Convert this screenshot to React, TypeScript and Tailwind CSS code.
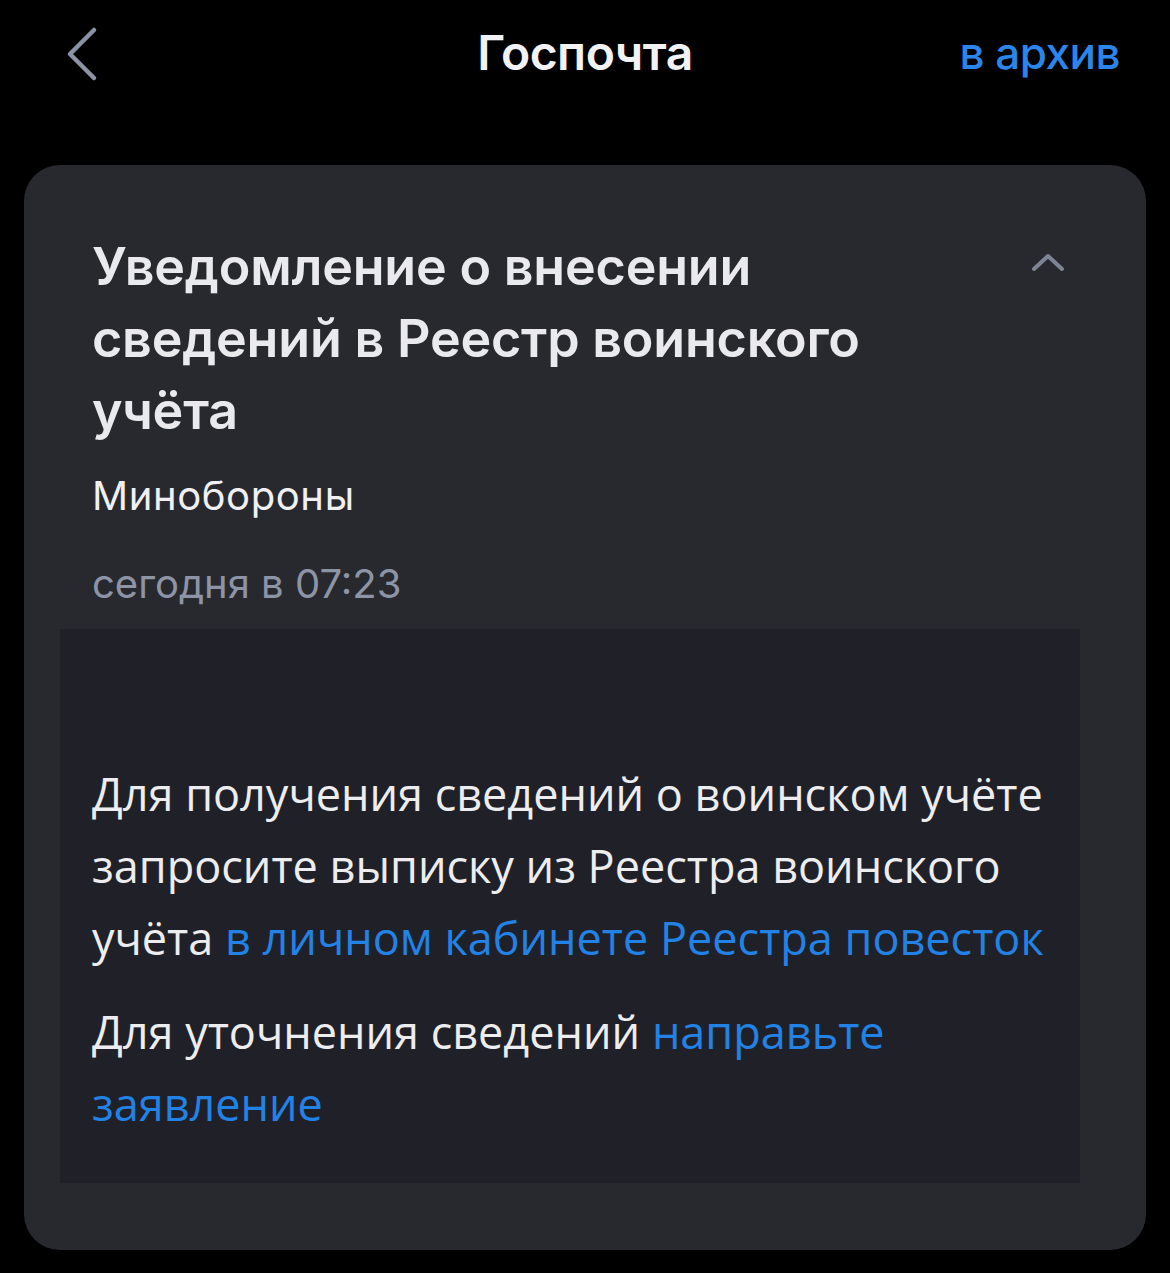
import React from 'react';

const ChevronLeft = () => (
    <svg width="40" height="56" viewBox="0 0 40 56" fill="none">
        <path d="M32 4 L8 28 L32 52" stroke="#8a93a6" strokeWidth="4.5" strokeLinecap="round" strokeLinejoin="round" />
    </svg>
);

const ChevronUp = () => (
    <svg width="36" height="22" viewBox="0 0 36 22" fill="none">
        <path d="M4 18 L18 5 L32 18" stroke="#7c8496" strokeWidth="4" strokeLinecap="round" strokeLinejoin="round" />
    </svg>
);

const App: React.FC = () => {
    return (
        <div className="min-h-[1273px] w-[1170px] bg-black" style={{ fontFamily: 'Inter, "Noto Sans", sans-serif' }}>
            {/* top bar */}
            <div className="relative flex h-[106px] items-center justify-between px-[62px] pr-[50px]">
                <button className="flex items-center pt-[2px]">
                    <ChevronLeft />
                </button>
                <h1 className="absolute left-0 right-0 text-center text-[48px] font-semibold tracking-[-0.5px] text-[#f2f2f5]">
                    Госпочта
                </h1>
                <span className="text-[44px] font-medium tracking-[-0.5px] text-[#2a86e8]">в архив</span>
            </div>

            <div className="px-[24px] pt-[59px]">
                <div className="rounded-[36px] bg-[#28292f] pt-[66px] pb-[67px]">
                    <div className="flex items-start justify-between pl-[68px] pr-[80px]">
                        <h2 className="w-[850px] text-[52px] font-semibold leading-[72px] tracking-[-0.2px] text-[#e9e9ee]">
                            Уведомление о внесении сведений в Реестр воинского учёта
                        </h2>
                        <div className="pt-[20px]">
                            <ChevronUp />
                        </div>
                    </div>
                    <div className="pl-[68px] pt-[24px] text-[40px] leading-[50px] tracking-[0.6px] text-[#f0f0f3]">Минобороны</div>
                    <div className="pl-[68px] pt-[38px] text-[40px] leading-[50px] text-[#8d94a6]">сегодня в 07:23</div>

                    <div
                        className="mt-[20px] ml-[36px] mr-[66px] bg-[#202128] pl-[32px] pr-[4px] pt-[129px] pb-[43px] text-[45px] leading-[72px] text-[#ededf0]"
                        style={{ fontFamily: '"Open Sans", "Noto Sans", sans-serif' }}
                    >
                        <p>
                            Для получения сведений о воинском учёте запросите выписку из Реестра воинского учёта{' '}
                            <span className="text-[#2282e6]">в личном кабинете Реестра повесток</span>
                        </p>
                        <p className="mt-[22px]">
                            Для уточнения сведений <span className="text-[#2282e6]">направьте заявление</span>
                        </p>
                    </div>
                </div>
            </div>
        </div>
    );
};

export default App;
